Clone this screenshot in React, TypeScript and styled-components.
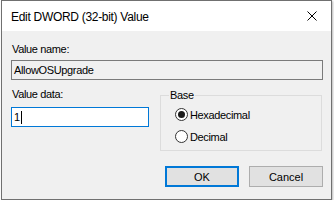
import React from "react";
import styled, { createGlobalStyle } from "styled-components";

const GlobalStyle = createGlobalStyle`
  html, body {
    margin: 0;
    padding: 0;
    background: #ffffff;
  }
  body {
    font-family: "Liberation Sans", Arial, sans-serif;
  }
`;

const Window = styled.div`
  box-sizing: border-box;
  width: 331px;
  height: 200px;
  margin-left: 1px;
  border: 1px solid #707070;
  background: #f0f0f0;
  box-shadow: 1px 1px 2px rgba(0, 0, 0, 0.28);
  display: flex;
  flex-direction: column;
`;

const TitleBar = styled.div`
  height: 30px;
  background: #ffffff;
  display: flex;
  align-items: center;
  justify-content: space-between;
  padding: 0 9px 0 9px;
`;

const Title = styled.span`
  font-size: 12px;
  letter-spacing: -0.3px;
  color: #000;
  padding-top: 1px;
`;

const CloseButton = styled.div`
  width: 12px;
  height: 12px;
  margin-right: 4px;
  display: flex;
  align-items: center;
  justify-content: center;
`;

const Body = styled.div`
  flex: 1;
  padding: 12px 8px 0 9px;
  display: flex;
  flex-direction: column;
`;

const Label = styled.div<{ $gap?: number }>`
  font-size: 11px;
  line-height: 13px;
  letter-spacing: -0.35px;
  color: #000;
  padding-left: 1px;
  margin-bottom: ${(p) => p.$gap ?? 0}px;
`;

const TextBox = styled.div<{ $focused?: boolean; $readOnly?: boolean }>`
  box-sizing: border-box;
  height: 20px;
  border: 1px solid ${(p) => (p.$focused ? "#0078d7" : "#7a7a7a")};
  background: ${(p) => (p.$readOnly ? "#f0f0f0" : "#ffffff")};
  font-size: 11px;
  letter-spacing: -0.35px;
  color: #000;
  display: flex;
  align-items: center;
  padding-left: 2px;
`;

const Caret = styled.span`
  display: inline-block;
  width: 1px;
  height: 13px;
  background: #000;
  margin-left: 1px;
`;

const Row = styled.div`
  display: grid;
  grid-template-columns: 138px 162px;
  column-gap: 11px;
  margin-top: 8px;
`;

const Column = styled.div`
  display: flex;
  flex-direction: column;
  gap: 6px;
`;

const GroupBox = styled.fieldset`
  box-sizing: border-box;
  margin: 1px 0 0 0;
  padding: 7px 0 0 14px;
  height: 62px;
  border: 1px solid #dcdcdc;
  display: flex;
  flex-direction: column;
  gap: 9px;
`;

const Legend = styled.legend`
  font-size: 11px;
  letter-spacing: -0.35px;
  padding: 0 1px;
  margin-left: -6px;
  color: #000;
`;

const RadioRow = styled.div`
  display: flex;
  align-items: center;
  gap: 2px;
  font-size: 11px;
  letter-spacing: -0.35px;
  color: #000;
  height: 13px;
`;

const RadioCircle = styled.span<{ $checked?: boolean }>`
  box-sizing: border-box;
  width: 13px;
  height: 13px;
  border-radius: 50%;
  border: 1px solid #333333;
  background: #ffffff;
  display: flex;
  align-items: center;
  justify-content: center;

  &::after {
    content: "";
    display: ${(p) => (p.$checked ? "block" : "none")};
    width: 7px;
    height: 7px;
    border-radius: 50%;
    background: #1a1a1a;
  }
`;

const ButtonRow = styled.div`
  display: flex;
  justify-content: flex-end;
  gap: 10px;
  margin-top: 15px;
`;

const Button = styled.div<{ $default?: boolean }>`
  box-sizing: border-box;
  width: 74px;
  height: 21px;
  background: #e1e1e1;
  border: ${(p) => (p.$default ? "2px solid #0078d7" : "1px solid #adadad")};
  font-size: 11px;
  color: #000;
  display: flex;
  align-items: center;
  justify-content: center;
`;

const App: React.FC = () => {
  return (
    <>
      <GlobalStyle />
      <Window>
        <TitleBar>
          <Title>Edit DWORD (32-bit) Value</Title>
          <CloseButton>
            <svg width="10" height="10" viewBox="0 0 10 10">
              <path d="M0.5 0.5 L9.5 9.5 M9.5 0.5 L0.5 9.5" stroke="#000" strokeWidth="1" />
            </svg>
          </CloseButton>
        </TitleBar>
        <Body>
          <Label $gap={4}>Value name:</Label>
          <TextBox $readOnly>AllowOSUpgrade</TextBox>
          <Row>
            <Column>
              <Label>Value data:</Label>
              <TextBox $focused>
                1<Caret />
              </TextBox>
            </Column>
            <GroupBox>
              <Legend>Base</Legend>
              <RadioRow>
                <RadioCircle $checked />
                Hexadecimal
              </RadioRow>
              <RadioRow>
                <RadioCircle />
                Decimal
              </RadioRow>
            </GroupBox>
          </Row>
          <ButtonRow>
            <Button $default>OK</Button>
            <Button>Cancel</Button>
          </ButtonRow>
        </Body>
      </Window>
    </>
  );
};

export default App;
